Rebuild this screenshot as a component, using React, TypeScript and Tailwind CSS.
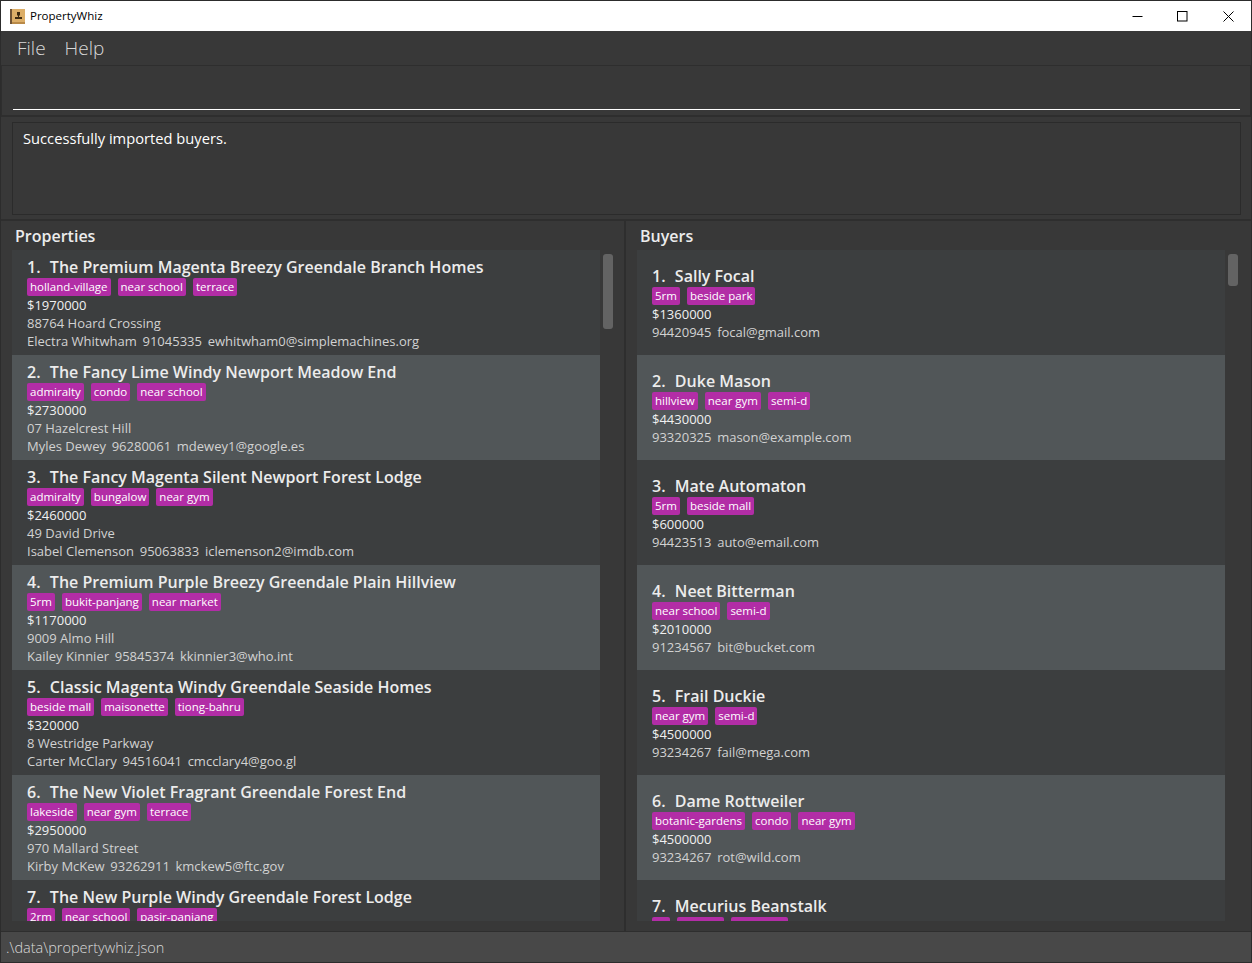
import React from 'react';

const font = { fontFamily: '"Open Sans", "Liberation Sans", sans-serif' };

const properties = [
  { name: 'The Premium Magenta Breezy Greendale Branch Homes', tags: ['holland-village', 'near school', 'terrace'], price: '$1970000', address: '88764 Hoard Crossing', contact: ['Electra Whitwham', '91045335', 'ewhitwham0@simplemachines.org'] },
  { name: 'The Fancy Lime Windy Newport Meadow End', tags: ['admiralty', 'condo', 'near school'], price: '$2730000', address: '07 Hazelcrest Hill', contact: ['Myles Dewey', '96280061', 'mdewey1@google.es'] },
  { name: 'The Fancy Magenta Silent Newport Forest Lodge', tags: ['admiralty', 'bungalow', 'near gym'], price: '$2460000', address: '49 David Drive', contact: ['Isabel Clemenson', '95063833', 'iclemenson2@imdb.com'] },
  { name: 'The Premium Purple Breezy Greendale Plain Hillview', tags: ['5rm', 'bukit-panjang', 'near market'], price: '$1170000', address: '9009 Almo Hill', contact: ['Kailey Kinnier', '95845374', 'kkinnier3@who.int'] },
  { name: 'Classic Magenta Windy Greendale Seaside Homes', tags: ['beside mall', 'maisonette', 'tiong-bahru'], price: '$320000', address: '8 Westridge Parkway', contact: ['Carter McClary', '94516041', 'cmcclary4@goo.gl'] },
  { name: 'The New Violet Fragrant Greendale Forest End', tags: ['lakeside', 'near gym', 'terrace'], price: '$2950000', address: '970 Mallard Street', contact: ['Kirby McKew', '93262911', 'kmckew5@ftc.gov'] },
  { name: 'The New Purple Windy Greendale Forest Lodge', tags: ['2rm', 'near school', 'pasir-panjang'], price: '', address: '', contact: [] },
];

const buyers = [
  { name: 'Sally Focal', tags: ['5rm', 'beside park'], price: '$1360000', contact: ['94420945', 'focal@gmail.com'] },
  { name: 'Duke Mason', tags: ['hillview', 'near gym', 'semi-d'], price: '$4430000', contact: ['93320325', 'mason@example.com'] },
  { name: 'Mate Automaton', tags: ['5rm', 'beside mall'], price: '$600000', contact: ['94423513', 'auto@email.com'] },
  { name: 'Neet Bitterman', tags: ['near school', 'semi-d'], price: '$2010000', contact: ['91234567', 'bit@bucket.com'] },
  { name: 'Frail Duckie', tags: ['near gym', 'semi-d'], price: '$4500000', contact: ['93234267', 'fail@mega.com'] },
  { name: 'Dame Rottweiler', tags: ['botanic-gardens', 'condo', 'near gym'], price: '$4500000', contact: ['93234267', 'rot@wild.com'] },
  { name: 'Mecurius Beanstalk', tags: ['hi', 'geylang', 'near mall'], price: '', contact: [] },
];

function Tags({ tags }: { tags: string[] }) {
  return (
    <div className="flex h-[18px] gap-[7px]">
      {tags.map((t) => (
        <span key={t} className="h-[18px] min-w-[18px] rounded-[2px] bg-[#b22da6] px-[3px] text-[11.5px] leading-[17px] text-white">
          {t}
        </span>
      ))}
    </div>
  );
}

function Row({ children, className }: { children: React.ReactNode; className: string }) {
  return <div className={`h-[18px] whitespace-pre text-[13px] leading-[18px] ${className}`}>{children}</div>;
}

function Contact({ parts }: { parts: string[] }) {
  return (
    <div className="flex h-[18px] gap-[5.7px] whitespace-pre text-[13px] leading-[18px] text-[#d2d2d2]">
      {parts.map((part) => (
        <span key={part}>{part}</span>
      ))}
    </div>
  );
}

function CardTitle({ i, name }: { i: number; name: string }) {
  return (
    <div className="h-[22px] whitespace-pre text-[16px] font-semibold leading-[22px] text-[#ececec]">
      <span className="mr-px">{`${i + 1}.  `}</span>
      {name}
    </div>
  );
}

function PropertyCard({ i, p }: { i: number; p: (typeof properties)[number] }) {
  return (
    <div className={`h-[105px] shrink-0 pl-[15px] pt-[6px] ${i % 2 === 0 ? 'bg-[#3c3e3f]' : 'bg-[#515658]'}`}>
      <CardTitle i={i} name={p.name} />
      <Tags tags={p.tags} />
      <Row className="text-[#f0f0f0]">{p.price}</Row>
      <Row className="text-[#d2d2d2]">{p.address}</Row>
      <Contact parts={p.contact} />
    </div>
  );
}

function BuyerCard({ i, b }: { i: number; b: (typeof buyers)[number] }) {
  return (
    <div className={`h-[105px] shrink-0 pl-[15px] pt-[15px] ${i % 2 === 0 ? 'bg-[#3c3e3f]' : 'bg-[#515658]'}`}>
      <CardTitle i={i} name={b.name} />
      <Tags tags={b.tags} />
      <Row className="text-[#f0f0f0]">{b.price}</Row>
      <Contact parts={b.contact} />
    </div>
  );
}

function Scrollbar({ height }: { height: string }) {
  return (
    <div className="w-[25px] shrink-0 pl-[3px] pt-[4px]">
      <div className={`w-[10px] rounded-[3px] bg-[#636363] ${height}`} />
    </div>
  );
}

export default function App() {
  return (
    <div className="flex h-[963px] w-[1252px] flex-col overflow-hidden border border-[#2c2c2c] bg-[#383838]" style={font}>
      {/* Title bar */}
      <div className="flex h-[30px] shrink-0 items-center bg-white pl-[9px] text-black">
        <svg width="15" height="15" viewBox="0 0 15 15">
          <rect width="15" height="15" fill="#dcae68" />
          <rect width="2" height="15" fill="#6f5335" />
          <rect x="2" y="13" width="13" height="2" fill="#b98a48" />
          <path d="M7 3h3v3.5h-1V8h3v2H5V8h3V6.5H7z" fill="#3d2a12" />
        </svg>
        <span className="ml-[5px] text-[11.5px]">PropertyWhiz</span>
        <div className="ml-auto flex items-center">
          <svg width="11" height="11" viewBox="0 0 11 11" className="mr-[34px]">
            <path d="M0.5 5.5h10" stroke="#000" fill="none" />
          </svg>
          <svg width="11" height="11" viewBox="0 0 11 11" className="mr-[35px]">
            <rect x="0.5" y="0.5" width="9.5" height="9.5" stroke="#000" fill="none" />
          </svg>
          <svg width="11" height="11" viewBox="0 0 11 11" className="mr-[17px]">
            <path d="M0.5 0.5l10 10M10.5 0.5l-10 10" stroke="#000" fill="none" />
          </svg>
        </div>
      </div>

      {/* Menu */}
      <div className="flex h-[35px] shrink-0 items-center gap-[19px] border-b border-[#2e2e2e] pl-[16px] text-[19px] font-light text-[#d8d8d8]">
        <span>File</span>
        <span>Help</span>
      </div>

      {/* Command box */}
      <div className="h-[51px] shrink-0 border-b-[2px] border-l border-r border-[#2e2e2e] pl-[11px] pr-[10px] pt-[43px]">
        <div className="h-px bg-white" />
      </div>

      {/* Result */}
      <div className="h-[104px] shrink-0 border-b-[2px] border-[#2e2e2e] pl-[11px] pr-[10px] pt-[5px]">
        <div className="h-[93px] border border-[#2b2b2b] pl-[10px] pt-[5px] text-[14.7px] leading-[21px] text-white">
          Successfully imported buyers.
        </div>
      </div>

      {/* Lists */}
      <div className="flex min-h-0 flex-1">
        <div className="flex w-[625px] shrink-0 flex-col border-r-[2px] border-[#2e2e2e] pl-[11px]">
          <div className="h-[29px] shrink-0 pl-[3px] pt-[4px] text-[16px] font-semibold leading-[22px] text-[#ececec]">Properties</div>
          <div className="flex h-[671px] shrink-0">
            <div className="flex w-[588px] shrink-0 flex-col overflow-hidden">
              {properties.map((p, i) => (
                <PropertyCard key={p.name} i={i} p={p} />
              ))}
            </div>
            <Scrollbar height="h-[75px]" />
          </div>
        </div>
        <div className="flex min-w-0 flex-1 flex-col pl-[11px]">
          <div className="h-[29px] shrink-0 pl-[3px] pt-[4px] text-[16px] font-semibold leading-[22px] text-[#ececec]">Buyers</div>
          <div className="flex h-[671px] shrink-0">
            <div className="flex w-[588px] shrink-0 flex-col overflow-hidden">
              {buyers.map((b, i) => (
                <BuyerCard key={b.name} i={i} b={b} />
              ))}
            </div>
            <Scrollbar height="h-[32px]" />
          </div>
        </div>
      </div>

      {/* Status bar */}
      <div className="flex h-[31px] shrink-0 items-center border-t border-[#2e2e2e] bg-[#484848] pl-[5px] pt-[2px] text-[14.5px] font-light text-[#d8d8d8]">
        .\data\propertywhiz.json
      </div>
    </div>
  );
}
